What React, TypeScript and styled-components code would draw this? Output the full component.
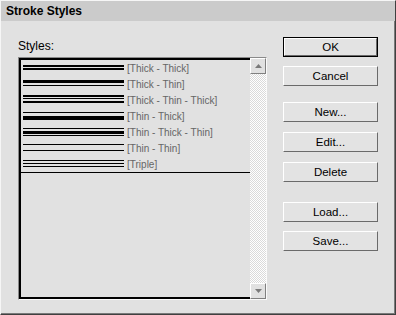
import React from "react";
import styled, { createGlobalStyle } from "styled-components";

const Global = createGlobalStyle`
  html, body { margin: 0; padding: 0; background: #e1e1e1; }
  body { font-family: "Liberation Sans", Arial, sans-serif; }
`;

const Window = styled.div`
  box-sizing: border-box;
  width: 396px;
  height: 315px;
  background: #e1e1e1;
  border-top: 1px solid #f6f6f6;
  border-left: 1px solid #f6f6f6;
  border-right: 1px solid #404040;
  border-bottom: 1px solid #404040;
  box-shadow: inset -1px -1px 0 #7a7a7a;
  display: flex;
  flex-direction: column;
`;

const TitleBar = styled.div`
  height: 20px;
  background: #cbcbcb;
  padding-left: 5px;
  font-weight: bold;
  font-size: 12px;
  line-height: 20px;
  color: #000;
`;

const Body = styled.div`
  display: flex;
  flex: 1;
`;

const LeftCol = styled.div`
  display: flex;
  flex-direction: column;
  padding-left: 17px;
  padding-top: 18px;
`;

const Label = styled.div`
  font-size: 12px;
  line-height: 14px;
  color: #000;
  margin-bottom: 4px;
`;

const ListFrame = styled.div`
  box-sizing: border-box;
  width: 249px;
  height: 243px;
  border-top: 1px solid #8a8a8a;
  border-left: 1px solid #8a8a8a;
  border-right: 1px solid #fafafa;
  border-bottom: 1px solid #fafafa;
  display: flex;
`;

const ListBody = styled.div`
  flex: 1;
  border-left: 2px solid #000;
  border-top: 2px solid #000;
  border-bottom: 2px solid #000;
  background: #e1e1e1;
`;

const Items = styled.div`
  border-bottom: 1px solid #000;
  padding-left: 2px;
`;

const Row = styled.div`
  display: flex;
  align-items: center;
  height: 16px;
`;

const Sample = styled.svg`
  display: block;
  flex: none;
`;

const ItemText = styled.span`
  margin-left: 3px;
  font-size: 10px;
  color: #666666;
  white-space: nowrap;
`;

const ScrollBar = styled.div`
  width: 16px;
  display: flex;
  flex-direction: column;
  background: repeating-conic-gradient(#ffffff 0 25%, #dadada 0 50%) 0 0 / 2px 2px;
`;

const Track = styled.div`
  flex: 1;
`;

const ScrollBtn = styled.div`
  box-sizing: border-box;
  width: 16px;
  height: 16px;
  background: #e1e1e1;
  border-top: 1px solid #fff;
  border-left: 1px solid #fff;
  border-right: 1px solid #808080;
  border-bottom: 1px solid #808080;
  display: flex;
  align-items: center;
  justify-content: center;
`;

const Buttons = styled.div`
  display: flex;
  flex-direction: column;
  margin-left: 16px;
  padding-top: 16px;
`;

const Btn = styled.div<{ $default?: boolean; $gap?: number }>`
  box-sizing: border-box;
  width: 95px;
  height: 20px;
  margin-top: ${(p) => p.$gap ?? 0}px;
  border: 1px solid ${(p) => (p.$default ? "#000" : "transparent")};
  display: flex;
`;

const BtnFace = styled.div<{ $default?: boolean }>`
  box-sizing: border-box;
  flex: 1;
  background: #e3e3e3;
  border-top: 1px solid #fff;
  border-left: 1px solid #fff;
  border-right: 1px solid #6a6a6a;
  border-bottom: 1px solid #6a6a6a;
  margin: ${(p) => (p.$default ? "0" : "-1px")};
  display: flex;
  align-items: center;
  justify-content: center;
  font-size: 11.5px;
  color: #000;
`;

type Line = [number, number];
const styles: { name: string; lines: Line[] }[] = [
  { name: "[Thick - Thick]", lines: [[4, 2], [7, 2]] },
  { name: "[Thick - Thin]", lines: [[3, 3], [8, 1]] },
  { name: "[Thick - Thin - Thick]", lines: [[2, 2], [5, 1], [8, 2]] },
  { name: "[Thin - Thick]", lines: [[3, 1], [7, 4]] },
  { name: "[Thin - Thick - Thin]", lines: [[3, 1], [6, 3], [10, 1]] },
  { name: "[Thin - Thin]", lines: [[3, 1], [9, 1]] },
  { name: "[Triple]", lines: [[3, 1], [6, 1], [9, 1]] },
];

const Arrow = ({ up }: { up?: boolean }) => (
  <svg width="7" height="4" viewBox="0 0 7 4">
    <polygon points={up ? "3.5,0 7,4 0,4" : "0,0 7,0 3.5,4"} fill="#7a7a7a" />
  </svg>
);

export default function App() {
  return (
    <>
      <Global />
      <Window>
        <TitleBar>Stroke Styles</TitleBar>
        <Body>
          <LeftCol>
            <Label>Styles:</Label>
            <ListFrame>
              <ListBody>
                <Items>
                  {styles.map((s) => (
                    <Row key={s.name}>
                      <Sample width="101" height="16" viewBox="0 0 101 16">
                        {s.lines.map(([y, h], i) => (
                          <rect key={i} x="0" y={y + 1} width="101" height={h} fill="#000" />
                        ))}
                      </Sample>
                      <ItemText>{s.name}</ItemText>
                    </Row>
                  ))}
                </Items>
              </ListBody>
              <ScrollBar>
                <ScrollBtn>
                  <Arrow up />
                </ScrollBtn>
                <Track />
                <ScrollBtn>
                  <Arrow />
                </ScrollBtn>
              </ScrollBar>
            </ListFrame>
          </LeftCol>
          <Buttons>
            <Btn $default>
              <BtnFace $default>OK</BtnFace>
            </Btn>
            <Btn $gap={9}>
              <BtnFace>Cancel</BtnFace>
            </Btn>
            <Btn $gap={16}>
              <BtnFace>New...</BtnFace>
            </Btn>
            <Btn $gap={10}>
              <BtnFace>Edit...</BtnFace>
            </Btn>
            <Btn $gap={10}>
              <BtnFace>Delete</BtnFace>
            </Btn>
            <Btn $gap={20}>
              <BtnFace>Load...</BtnFace>
            </Btn>
            <Btn $gap={9}>
              <BtnFace>Save...</BtnFace>
            </Btn>
          </Buttons>
        </Body>
      </Window>
    </>
  );
}
